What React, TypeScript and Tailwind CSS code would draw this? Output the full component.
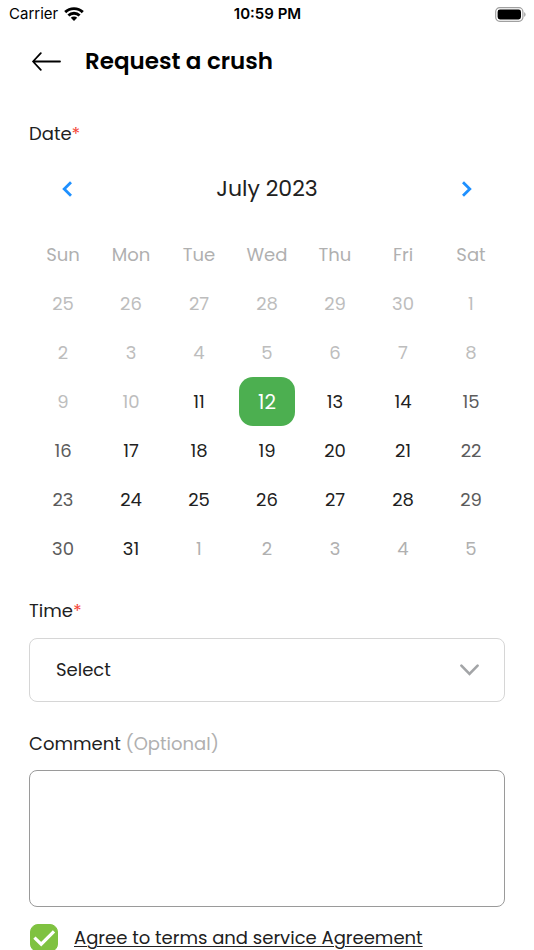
import { useState } from "react";
import clsx from "clsx";

type Tone = "past" | "outside" | "weekend" | "open";

const WEEKDAYS = ["Sun", "Mon", "Tue", "Wed", "Thu", "Fri", "Sat"];

const WEEKS = [
  [25, 26, 27, 28, 29, 30, 1],
  [2, 3, 4, 5, 6, 7, 8],
  [9, 10, 11, 12, 13, 14, 15],
  [16, 17, 18, 19, 20, 21, 22],
  [23, 24, 25, 26, 27, 28, 29],
  [30, 31, 1, 2, 3, 4, 5],
];

const TODAY = 11;

const TONES: Record<Tone, string> = {
  past: "text-[#bdbdbd]",
  outside: "text-[#b0b0b0]",
  weekend: "text-[#5c5c5c]",
  open: "text-[#212121]",
};

function toneOf(day: number, week: number, col: number): Tone {
  if (week === 0 && day > 7) return "past";
  if (week === WEEKS.length - 1 && day < 8) return "outside";
  if (day < TODAY) return "past";
  return col === 0 || col === 6 ? "weekend" : "open";
}

function StatusBar() {
  return (
    <div className="flex h-7 items-center justify-between pl-[9px] pr-2 font-['Inter',sans-serif] text-[15px] text-black">
      <div className="flex flex-1 items-center gap-[6px]">
        <span>Carrier</span>
        <svg width="20" height="14" viewBox="0 0 20 14" aria-hidden>
          <g fill="none" stroke="currentColor" strokeWidth="2.9">
            <path d="M1.2 5.1C6.1.4 13.9.4 18.8 5.1" />
            <path d="M4.4 8.5c3.1-3 8.1-3 11.2 0" />
          </g>
          <path d="M6.8 10.8a4.6 4.6 0 0 1 6.4 0L10 14z" fill="currentColor" />
        </svg>
      </div>
      <span className="font-semibold">10:59 PM</span>
      <div className="flex flex-1 justify-end">
        <svg width="31" height="15" viewBox="0 0 31 15" aria-hidden>
          <rect x="0.7" y="0.7" width="27.2" height="13.6" rx="4" fill="none" stroke="#a0a0a0" strokeWidth="1.2" />
          <rect x="2.6" y="2.6" width="23.4" height="9.8" rx="2.4" />
          <path d="M29.2 5.2c1.8.7 1.8 3.9 0 4.6z" fill="#a0a0a0" />
        </svg>
      </div>
    </div>
  );
}

function Calendar() {
  const [selected, setSelected] = useState("2-3");

  return (
    <section aria-labelledby="date-label">
      <div className="mt-[17px] flex h-12 items-center justify-between px-6">
        <button type="button" aria-label="Previous month" className="flex size-7 items-center justify-center">
          <svg width="10" height="16" viewBox="0 0 10 16" fill="none" stroke="#1e90ff" strokeWidth="2.8" aria-hidden>
            <path d="M9 1.2 2.2 8 9 14.8" />
          </svg>
        </button>
        <h2 className="text-[22px] leading-7 text-[#212121]">July 2023</h2>
        <button type="button" aria-label="Next month" className="flex size-7 items-center justify-center">
          <svg width="10" height="16" viewBox="0 0 10 16" fill="none" stroke="#1e90ff" strokeWidth="2.8" aria-hidden>
            <path d="M1 1.2 7.8 8 1 14.8" />
          </svg>
        </button>
      </div>

      <table className="mt-[17px] w-full table-fixed text-center">
        <thead>
          <tr>
            {WEEKDAYS.map((name) => (
              <th key={name} scope="col" className="h-[49px] p-0 font-normal text-[#b0b0b0]">
                {name}
              </th>
            ))}
          </tr>
        </thead>
        <tbody>
          {WEEKS.map((days, week) => (
            <tr key={week}>
              {days.map((day, col) => {
                const id = `${week}-${col}`;
                const tone = toneOf(day, week, col);
                const active = id === selected;
                return (
                  <td key={id} className="h-[49px] p-0">
                    <button
                      type="button"
                      disabled={tone === "past" || tone === "outside"}
                      aria-pressed={active}
                      onClick={() => setSelected(id)}
                      className={clsx(
                        "mx-auto block h-[49px] w-14 rounded-[14px]",
                        active ? "bg-[#4caf50] text-xl text-white" : TONES[tone],
                      )}
                    >
                      {day}
                    </button>
                  </td>
                );
              })}
            </tr>
          ))}
        </tbody>
      </table>
    </section>
  );
}

export default function App() {
  const [agreed, setAgreed] = useState(true);

  return (
    <div className="h-dvh overflow-y-auto bg-white font-['Poppins','Inter',sans-serif] text-lg leading-7 text-[#212121] [scrollbar-width:none]">
      <StatusBar />

      <header className="flex h-[66px] items-center gap-6 px-8">
        <button type="button" aria-label="Back">
          <svg width="29" height="19" viewBox="0 0 29 19" fill="none" stroke="#000" strokeWidth="1.8" strokeLinecap="round" strokeLinejoin="round" aria-hidden>
            <path d="M28 9.5H1.2M8.8 1.2 1 9.5l7.8 8.3" />
          </svg>
        </button>
        <h1 className="text-[23px] font-semibold text-black">Request a crush</h1>
      </header>

      <form className="px-[29px] pb-6 pt-[26px]" onSubmit={(e) => e.preventDefault()}>
        <p id="date-label">
          Date<span className="text-[#f44336]">*</span>
        </p>
        <Calendar />

        <label htmlFor="time" className="mt-6 block">
          Time<span className="text-[#f44336]">*</span>
        </label>
        <div className="relative mt-[13px]">
          <select
            id="time"
            className="h-16 w-full appearance-none rounded-lg border border-[#d6d6d6] bg-white px-[26px]"
          >
            <option>Select</option>
          </select>
          <svg className="pointer-events-none absolute right-[26px] top-[26px]" width="19" height="12" viewBox="0 0 19 12" fill="none" stroke="#a3a5a7" strokeWidth="2.6" strokeLinecap="round" aria-hidden>
            <path d="m1.4 1.6 8.1 8.2 8.1-8.2" />
          </svg>
        </div>

        <label htmlFor="comment" className="mt-7 block">
          Comment <span className="text-[#b0b0b0]">(Optional)</span>
        </label>
        <textarea
          id="comment"
          className="mt-3 block h-[137px] w-full resize-none rounded-lg border border-[#9a9a9a] px-4 py-3"
        />

        <div className="mt-[17px] flex items-center gap-4 pl-px">
          <span className="relative size-7">
            <input
              id="agree"
              type="checkbox"
              aria-labelledby="agree-text"
              checked={agreed}
              onChange={(e) => setAgreed(e.target.checked)}
              className="block size-7 appearance-none rounded-lg border border-[#7fc241] checked:bg-[#7fc241]"
            />
            {agreed ? (
              <svg className="pointer-events-none absolute inset-0" width="28" height="28" viewBox="0 0 28 28" fill="none" stroke="#fff" strokeWidth="3.2" aria-hidden>
                <path d="m4.4 13.6 6.8 6.6L24 7.4" />
              </svg>
            ) : null}
          </span>
          <a id="agree-text" href="#terms" className="underline decoration-1 underline-offset-2">
            Agree to terms and service Agreement
          </a>
        </div>
      </form>
    </div>
  );
}
